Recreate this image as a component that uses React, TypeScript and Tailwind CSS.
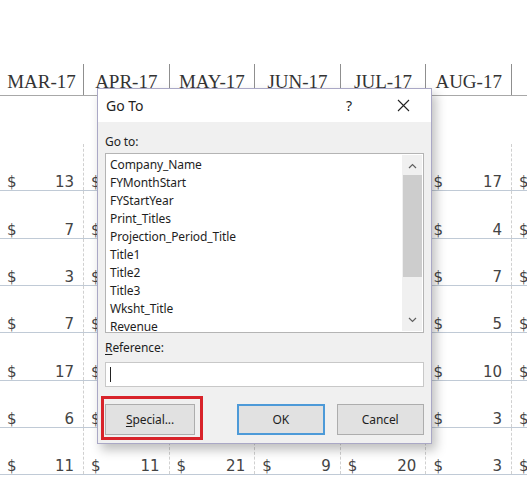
import React from 'react';

const months = ['MAR-17', 'APR-17', 'MAY-17', 'JUN-17', 'JUL-17', 'AUG-17', 'SEP-17'];

// values per row, one per month column
const rows: number[][] = [
  [13, 12, 8, 15, 9, 17, 14],
  [7, 5, 6, 4, 8, 4, 6],
  [3, 9, 4, 6, 2, 7, 5],
  [7, 6, 11, 3, 8, 5, 9],
  [17, 14, 12, 16, 13, 10, 12],
  [6, 4, 8, 5, 7, 3, 6],
  [11, 11, 21, 9, 20, 3, 8],
];

const names = [
  'Company_Name',
  'FYMonthStart',
  'FYStartYear',
  'Print_Titles',
  'Projection_Period_Title',
  'Title1',
  'Title2',
  'Title3',
  'Wksht_Title',
  'Revenue',
];

const colW = (i: number) => (i === 0 ? 'w-[84px]' : i === 6 ? 'w-[90px]' : 'w-[85.6px]');

const Sheet: React.FC = () => (
  <div className="flex flex-col">
    <div className="h-[64px]" />
    {/* month headers */}
    <div className="flex h-[32px] border-b border-[#a8a8a8]">
      {months.map((m, i) => (
        <div
          key={m}
          className={`${colW(i)} shrink-0 flex items-center justify-center border-r border-[#8f8f8f] text-[19px] leading-none text-[#333] pt-[3px]`}
          style={{ fontFamily: '"Liberation Serif", serif' }}
        >
          {m}
        </div>
      ))}
    </div>
    <div className="h-[48px]" />
    {rows.map((r, ri) => (
      <div key={ri} className="flex h-[47.33px] border-b border-[#c0cad6]">
        {r.map((v, i) => (
          <div
            key={i}
            className={`${colW(i)} shrink-0 flex items-end justify-between pl-[7px] pr-[9px] pb-0 border-r border-dashed border-[#d0d0d0] text-[15px] leading-[15px] text-[#444]`}
            style={{ fontFamily: '"DejaVu Sans", sans-serif' }}
          >
            <span>$</span>
            <span>{v}</span>
          </div>
        ))}
      </div>
    ))}
  </div>
);

const GoToDialog: React.FC = () => (
  <div
    className="absolute left-[97px] top-[88px] w-[335px] h-[356px] border border-[#aaa8c6] bg-[#f0f0f0] shadow-[4px_6px_10px_rgba(0,0,0,0.25)] flex flex-col text-[#1e1e1e]"
    style={{ fontFamily: '"Noto Sans", "Open Sans", sans-serif' }}
  >
    {/* title bar */}
    <div className="h-[33px] bg-white flex items-center pl-[8px] shrink-0">
      <span className="text-[14px] flex-1">Go To</span>
      <span className="text-[14px] w-[12px] mr-[42px] text-center">?</span>
      <svg width="13" height="13" viewBox="0 0 13 13" className="mr-[21px]">
        <path d="M1 1 L12 12 M12 1 L1 12" stroke="#222" strokeWidth="1.1" />
      </svg>
    </div>

    <div className="flex flex-col px-[7px] text-[12px] tracking-[-0.1px]">
      <div className="mt-[11px] leading-[18px]">Go to:</div>
      <div className="mt-[2px] h-[180px] border border-[#b4b4b4] bg-white flex">
        <div className="flex-1 pl-[4px] pt-[2px]">
          {names.map((n) => (
            <div key={n} className="leading-[18px]">
              {n}
            </div>
          ))}
        </div>
        <div className="w-[20px] bg-[#f0f0f0] my-[1px] mr-[1px] flex flex-col items-center">
          <svg width="9" height="6" viewBox="0 0 9 6" className="mt-[8px]">
            <path d="M1 5 L4.5 1.5 L8 5" stroke="#606060" strokeWidth="1.2" fill="none" />
          </svg>
          <div className="mt-[6px] w-[19px] h-[102px] bg-[#cdcdcd]" />
          <div className="flex-1" />
          <svg width="9" height="6" viewBox="0 0 9 6" className="mb-[8px]">
            <path d="M1 1 L4.5 4.5 L8 1" stroke="#606060" strokeWidth="1.2" fill="none" />
          </svg>
        </div>
      </div>

      <div className="mt-[6px] leading-[18px]">
        <span className="underline underline-offset-2">R</span>eference:
      </div>
      <div className="mt-[5px] h-[25px] border border-[#c8c8c8] bg-white flex items-center pl-[4px]">
        <div className="w-[1px] h-[15px] bg-[#222]" />
      </div>

      <div className="mt-[17px] flex items-center">
        <div className="relative">
          <button className="w-[90px] h-[31px] bg-[#e1e1e1] border border-[#adadad]">
            <span className="underline underline-offset-2">S</span>pecial...
          </button>
          <div className="absolute left-[-4px] top-[-8px] w-[102px] h-[44px] border-[3px] border-[#d8232a]" />
        </div>
        <button className="ml-[42px] w-[88px] h-[31px] bg-[#e1e1e1] border-2 border-[#4d9ad8]">
          OK
        </button>
        <button className="ml-[12px] w-[88px] h-[31px] bg-[#e1e1e1] border border-[#adadad]">
          Cancel
        </button>
      </div>
    </div>
  </div>
);

export default function App() {
  return (
    <div className="relative w-[527px] h-[500px] overflow-hidden bg-white">
      <Sheet />
      <GoToDialog />
    </div>
  );
}
